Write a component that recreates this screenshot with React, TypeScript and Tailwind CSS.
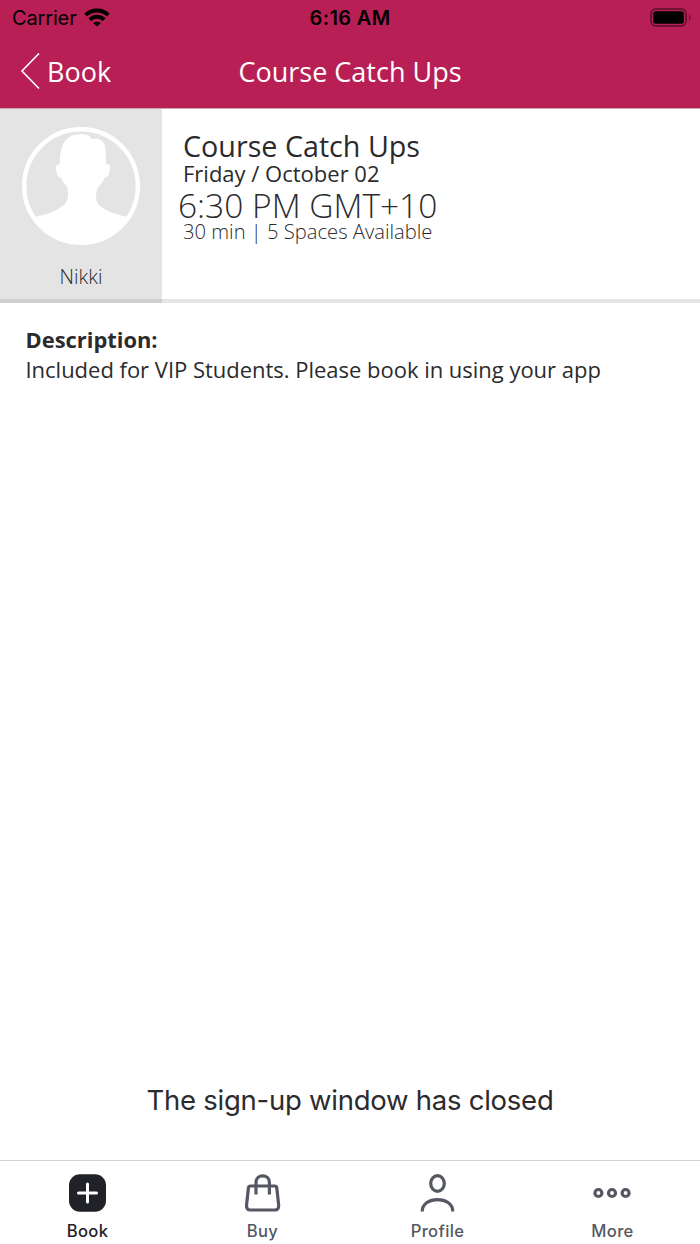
import type { ReactNode } from "react"

interface TabProps {
  label: string
  active?: boolean
  children: ReactNode
}

function Tab({ label, active = false, children }: TabProps) {
  return (
    <button
      className={`flex flex-1 flex-col items-center pt-3 ${active ? "text-[#212227]" : "text-[#555762]"}`}
    >
      <svg width="39" height="40" viewBox="0 0 39 40" fill="none" stroke="currentColor" strokeWidth="3.2">
        {children}
      </svg>
      <span className="mt-1.5 font-['Inter'] text-[16.6px] leading-6 font-medium tracking-[0.35px]">{label}</span>
    </button>
  )
}

function StatusBar() {
  return (
    <div className="grid h-9 grid-cols-3 items-center font-['Inter'] text-[20px] leading-9 text-black">
      <div className="flex items-center gap-[7px] pl-3">
        <span className="tracking-[-0.15px]">Carrier</span>
        <svg width="26" height="20" viewBox="0 0 26 20" fill="none" stroke="currentColor" strokeWidth="4">
          <path d="M1.7 7.1C8 1.1 18 1.1 24.3 7.1" />
          <path d="M5.9 11.7C10 7.9 16 7.9 20.1 11.7" />
          <path d="M9.1 15.1C11.3 13.2 14.7 13.2 16.9 15.1L13 18.6Z" fill="currentColor" stroke="none" />
        </svg>
      </div>
      <span className="text-center font-semibold tracking-[0.35px]">6:16 AM</span>
      <div className="flex justify-end pr-2">
        <svg width="42" height="20" viewBox="0 0 42 20">
          <rect x="1" y="1" width="35" height="17" rx="5" fill="none" stroke="#6d1234" strokeWidth="2" />
          <rect x="3.2" y="3.2" width="30.6" height="12.6" rx="2.5" fill="black" />
          <path d="M39 6.5C41.2 7.6 41.2 11.4 39 12.5Z" fill="#6d1234" />
        </svg>
      </div>
    </div>
  )
}

function Avatar() {
  return (
    <svg width="118" height="118" viewBox="0 0 118 118">
      <circle cx="59" cy="59" r="56.8" fill="none" stroke="white" strokeWidth="4.4" />
      <path
        d="M14 89.7C28 87 38 82 43 77C47 73 46.5 63 45 60C43 56 40 55 39 50.5C36 51 34 46 34 41C34 38 36 36.5 38 37C37.5 20 42 7.3 59 7.3C65 7.3 68.5 9 70 12.3C76 10 82.5 13 83.5 22L84 37C87 36.5 88 38 88 41C87.5 47 86 51 82.5 50.5C82 55 77 58 75 63C73.5 68 73.5 74 77 78C82 83 92 87 104.5 89.7C95 106 78 116 59 116C40 116 23 106 14 89.7Z"
        fill="white"
      />
    </svg>
  )
}

export default function App() {
  return (
    <div className="flex h-[1244px] w-[700px] flex-col overflow-hidden bg-white font-['Open_Sans'] whitespace-nowrap text-[#2b2b2d]">
      <header className="h-[109px] border-b border-[#d3a5b4] bg-[#b81f55]">
        <StatusBar />
        <div className="grid h-[72px] grid-cols-[200px_300px_200px] items-center text-[27px] leading-[72px] text-white">
          <button className="flex items-center gap-[7px] pl-5">
            <svg width="20" height="38" viewBox="0 0 20 38" fill="none" stroke="currentColor" strokeWidth="1.6">
              <path d="M19 0.5L2 18L19 35.5" />
            </svg>
            <span>Book</span>
          </button>
          <h1 className="text-center">Course Catch Ups</h1>
        </div>
      </header>

      <section className="flex h-[194px]">
        <div className="flex w-[162px] flex-col items-center border-b-4 border-[#cfcfcf] bg-[#e4e4e4] pt-[18px]">
          <Avatar />
          <span className="mt-[17px] text-[20px] leading-[30px] font-light">Nikki</span>
        </div>
        <div className="flex-1 border-b-4 border-[#e6e6e6] pt-[22px] pl-[21px]">
          <h2 className="text-[28.7px] leading-[30px]">Course Catch Ups</h2>
          <p className="text-[22px] leading-6">Friday / October 02</p>
          <p className="-ml-[5px] text-[33.5px] leading-10 font-light">6:30 PM GMT+10</p>
          <p className="text-[20.2px] leading-3 font-light">30 min | 5 Spaces Available</p>
        </div>
      </section>

      <main className="flex-1 px-[25.5px] pt-[22px] text-[22px] leading-7">
        <h3 className="text-[21.9px] leading-[30px] font-bold">Description:</h3>
        <p className="tracking-[-0.02px]">Included for VIP Students. Please book in using your app</p>
      </main>

      <p className="h-20 text-center font-['Inter'] text-[27.5px] leading-10 tracking-[-0.25px]">
        The sign-up window has closed
      </p>

      <nav className="flex h-[84px] border-t border-[#d1d1d3]">
        <Tab label="Book" active>
          <rect x="1" y="1.2" width="37" height="37.5" rx="11" fill="currentColor" stroke="none" />
          <path d="M19.5 11V29M10.5 20H28.5" stroke="white" strokeLinecap="round" strokeWidth="3" />
        </Tab>
        <Tab label="Buy">
          <path d="M7.5 13H31.7Q33.6 13 33.8 15L35.7 32.5Q35.7 37 32 37H7.2Q3.5 37 3.5 32.5L5.4 15Q5.6 13 7.5 13Z" />
          <path d="M13 21.5V9.5C13 0.6 26.4 0.6 26.4 9.5V21.5" />
        </Tab>
        <Tab label="Profile">
          <ellipse cx="19.5" cy="10.5" rx="6.8" ry="7.8" />
          <path d="M4.2 38.5C4.2 22.6 34.8 22.6 34.8 38.5" />
        </Tab>
        <Tab label="More">
          <circle cx="5.4" cy="20" r="3.5" />
          <circle cx="19" cy="20" r="3.5" />
          <circle cx="32.6" cy="20" r="3.5" />
        </Tab>
      </nav>
    </div>
  )
}
